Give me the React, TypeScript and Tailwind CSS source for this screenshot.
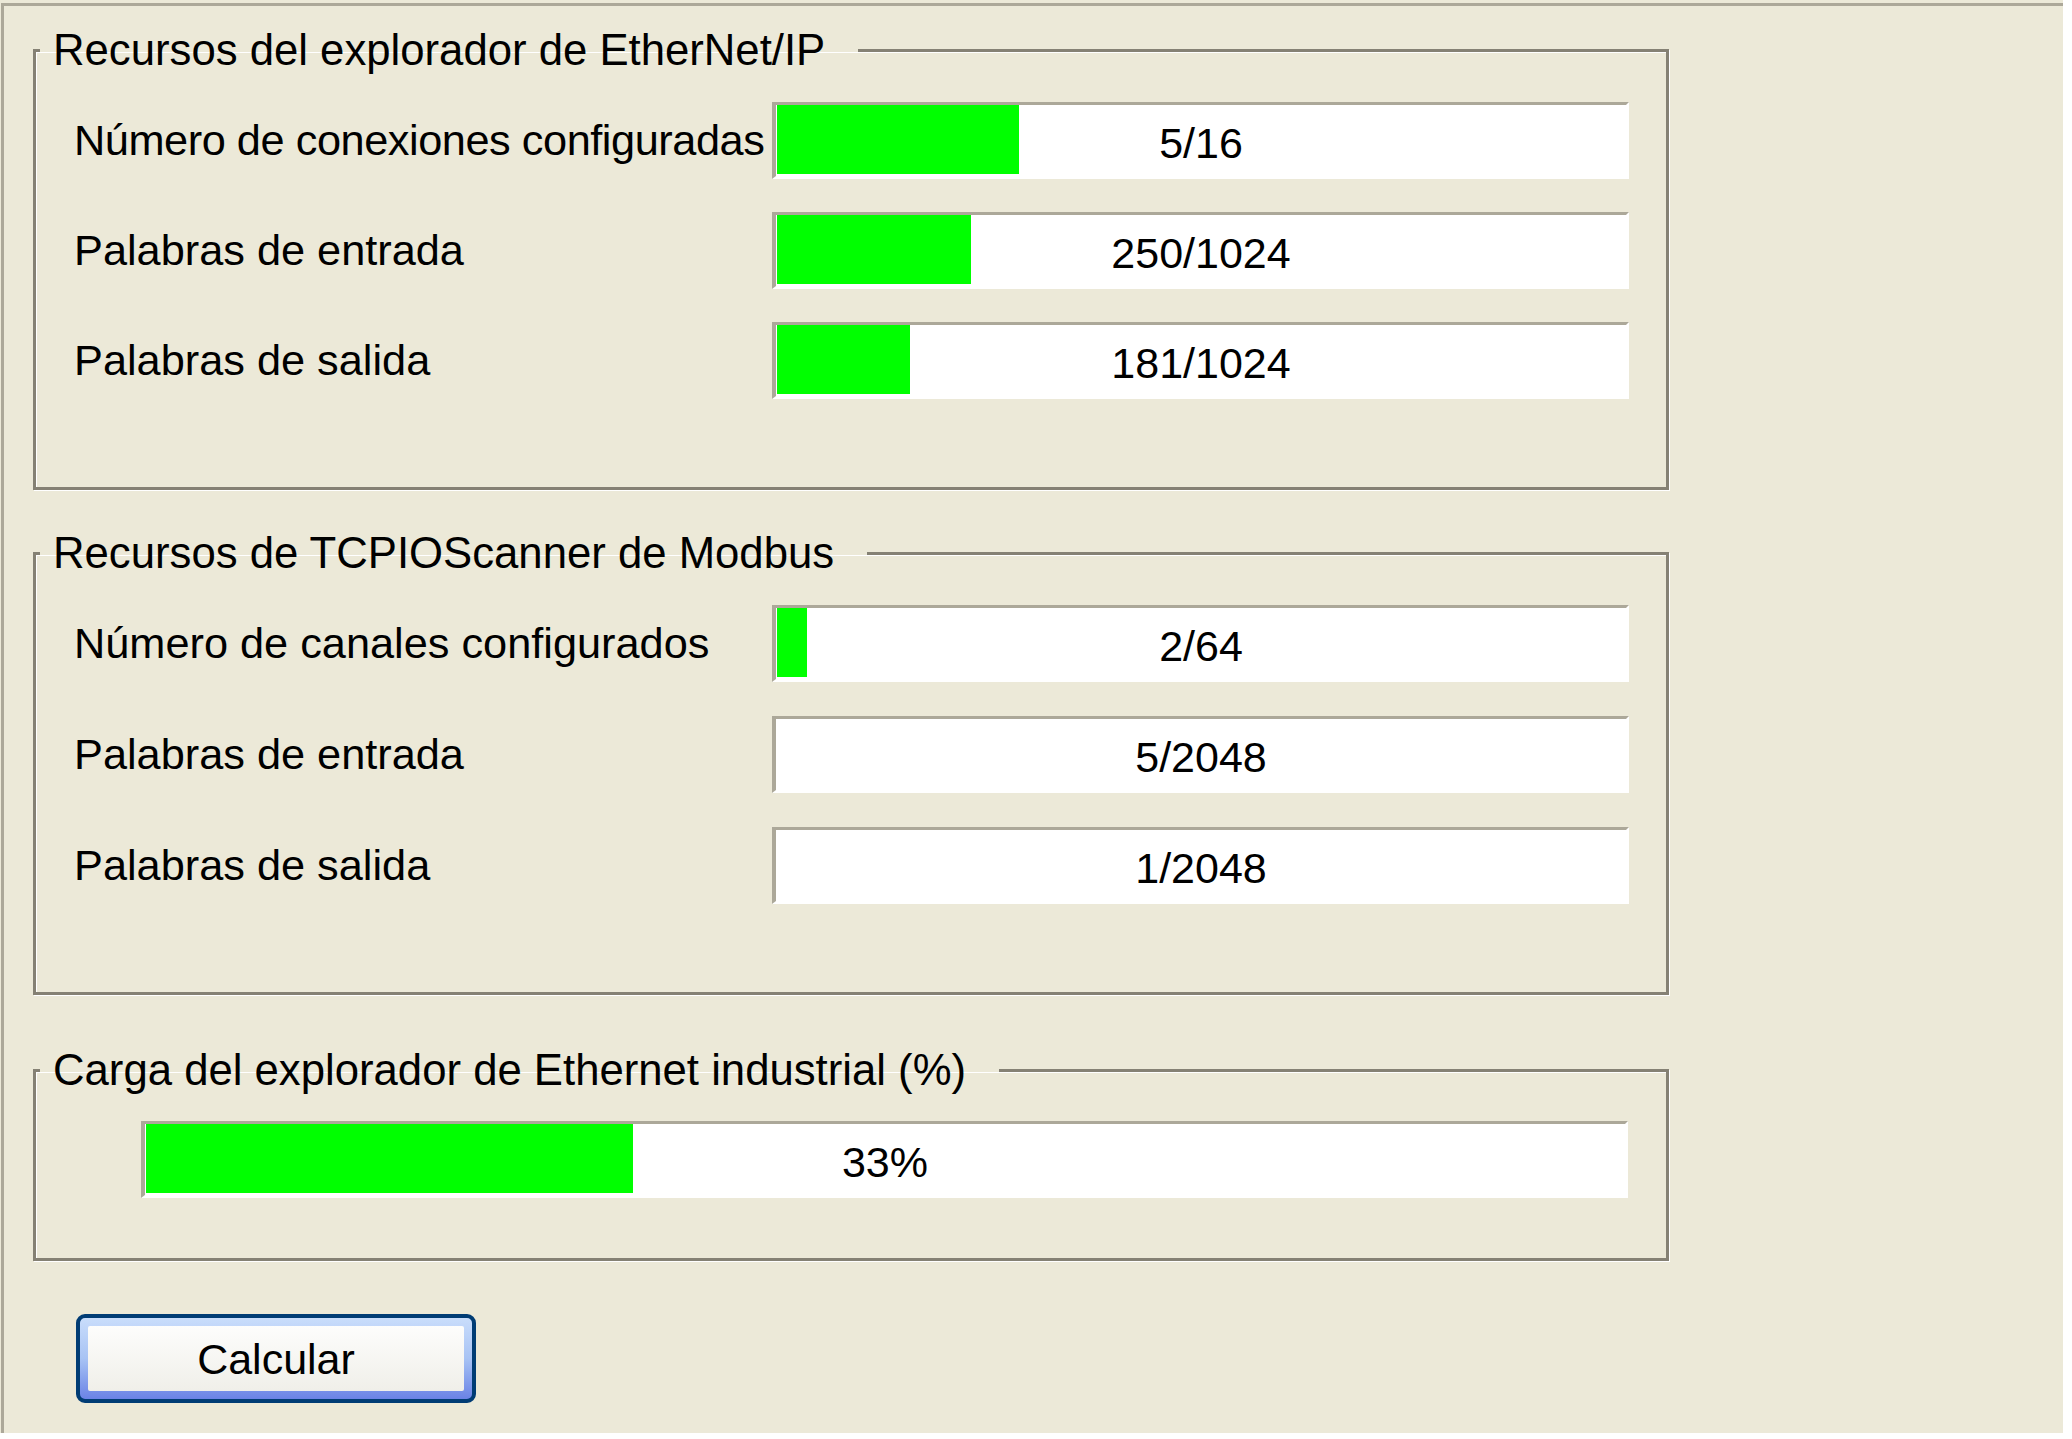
import React from "react";

type Row = { label: string; value: string; fill: number; tight?: boolean };

const ethernetRows: Row[] = [
  { label: "Número de conexiones configuradas", value: "5/16", fill: 242, tight: true },
  { label: "Palabras de entrada", value: "250/1024", fill: 194 },
  { label: "Palabras de salida", value: "181/1024", fill: 133 },
];

const modbusRows: Row[] = [
  { label: "Número de canales configurados", value: "2/64", fill: 30 },
  { label: "Palabras de entrada", value: "5/2048", fill: 0 },
  { label: "Palabras de salida", value: "1/2048", fill: 0 },
];

const Bar = ({ value, fill, width }: { value: string; fill: number; width: string }) => (
  <div
    className={`relative h-[77px] ${width} shrink-0 bg-white border-t-[3px] border-l-[4px] border-r-[3px] border-b-[3px] border-t-[#aca899] border-l-[#aca899] border-r-white border-b-white`}
  >
    {fill > 0 && <div className="ml-[1px] h-[69px] bg-[#00ff00]" style={{ width: fill }} />}
    {/* value label sits on top of the bar */}
    <div className="absolute inset-0 flex items-center justify-center pt-[4px] text-black">{value}</div>
  </div>
);

const Group = ({
  title,
  className,
  children,
}: {
  title: string;
  className: string;
  children: React.ReactNode;
}) => (
  <fieldset
    className={`w-[1636px] border-[3px] border-[#858174] shadow-[inset_1px_1px_0_#ffffff,1px_1px_0_#ffffff] ${className}`}
  >
    <legend className="ml-[4px] pl-[13px] pr-[33px] text-[43.7px] leading-[50px] text-black">{title}</legend>
    {children}
  </fieldset>
);

const Rows = ({ rows, gap }: { rows: Row[]; gap: string }) => (
  <div className={`flex flex-col ${gap} pl-[38px]`}>
    {rows.map((r) => (
      <div key={r.label} className="flex items-center">
        <div
          className={`w-[698px] shrink-0 -mt-[1px] whitespace-nowrap text-[43.3px] text-black ${
            r.tight ? "tracking-[-0.45px]" : ""
          }`}
        >
          {r.label}
        </div>
        <Bar value={r.value} fill={r.fill} width="w-[857px]" />
      </div>
    ))}
  </div>
);

export default function App() {
  return (
    <div
      className="min-h-screen bg-white text-[43px] leading-[50px]"
      style={{ fontFamily: '"Liberation Sans", Arial, sans-serif' }}
    >
      <div className="w-[2063px] h-[1433px] bg-[#ece9d8] pt-[3px] pl-[1px]">
        <div className="h-full border-t-[3px] border-l-[3px] border-[#aca899] pt-[19px] pl-[29px]">
          <Group title="Recursos del explorador de EtherNet/IP" className="pt-[27px] pb-[88px]">
            <Rows rows={ethernetRows} gap="gap-[33px]" />
          </Group>

          <Group title="Recursos de TCPIOScanner de Modbus" className="mt-[38px] pt-[27px] pb-[88px]">
            <Rows rows={modbusRows} gap="gap-[34px]" />
          </Group>

          <Group
            title="Carga del explorador de Ethernet industrial (%)"
            className="mt-[50px] pt-[26px] pb-[60px]"
          >
            <div className="pl-[105px]">
              <Bar value="33%" fill={487} width="w-[1487px]" />
            </div>
          </Group>

          <button
            type="button"
            className="mt-[53px] ml-[43px] block w-[400px] h-[89px] rounded-[9px] border-[4px] border-[#003c74] bg-gradient-to-b from-[#c9ddfb] via-[#a8c3f4] to-[#6b82e5] p-[8px]"
          >
            <span className="flex h-full w-full items-center justify-center rounded-[2px] bg-gradient-to-b from-[#fdfdfc] to-[#f0efe9] text-black">
              Calcular
            </span>
          </button>
        </div>
      </div>
    </div>
  );
}
